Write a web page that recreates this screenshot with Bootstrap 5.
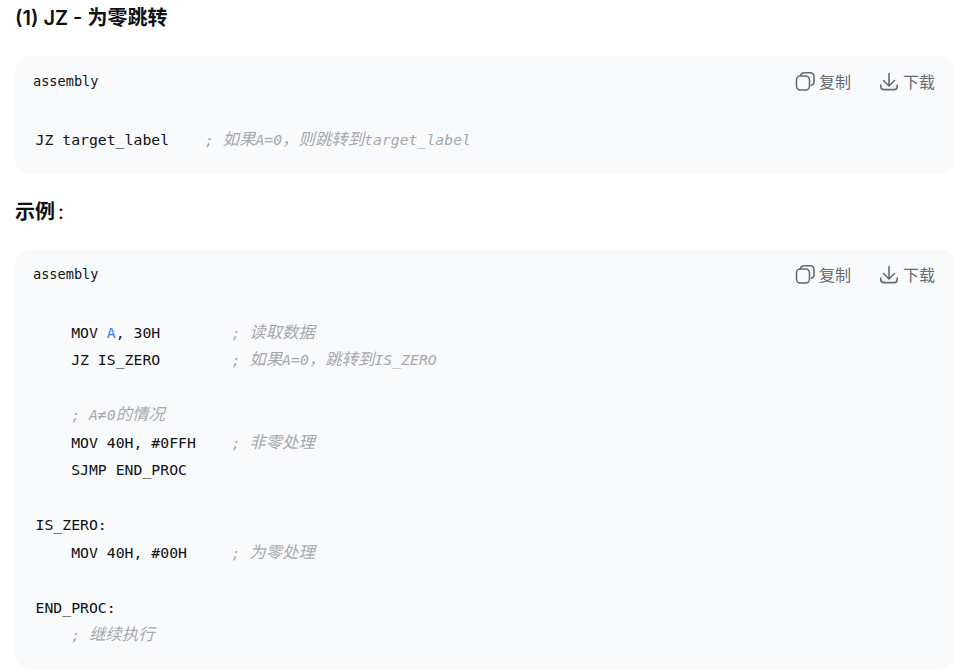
<!DOCTYPE html>
<html lang="zh">
<head>
<meta charset="utf-8">
<title>JZ</title>
<link href="https://cdn.jsdelivr.net/npm/bootstrap@5.3.0/dist/css/bootstrap.min.css" rel="stylesheet">
<style>
html,body{height:672px;overflow:hidden;background:#fff}
.page-wrap{padding:0 12px 0 15px;color:#0f1115}
.sec-title{font-size:20px;font-weight:600;line-height:28px;margin:4px 0 0;color:#0f1115;font-family:"Inter","Noto Sans CJK SC",sans-serif}
.sec-title.second{margin-top:24px}
.sec-title .colon{font-weight:400;font-family:"Inter",sans-serif;margin-left:3px}
.code-box{background:#f9fafb;border-radius:16px;padding:12px 20px 0 18px}
.code-box.first{margin-top:24px;height:118px}
.code-box.second{margin-top:23px;height:420px}
.code-head{height:26px}
.lang-name{font-family:"DejaVu Sans Mono","Noto Sans CJK SC",monospace;font-size:13.6px;line-height:26px;color:#0f1115}
.act-row{gap:28px}
.act-btn{font-size:16px;color:#666a72;line-height:26px;gap:4px;font-family:"Noto Sans CJK SC",sans-serif}
.act-btn svg{display:block}
.code-text{margin:32px 0 0 2.5px;font-family:"DejaVu Sans Mono","Noto Sans CJK SC",monospace;font-size:14.8px;line-height:27.45px;color:#0f1115;overflow:visible;white-space:pre}
.cmt{color:#a6a8ad;font-style:italic}
.cn{font-family:"Noto Sans CJK SC",sans-serif;font-size:16.4px;line-height:1}
.kw{color:#3b7de8}
</style>
</head>
<body>
<main class="page-wrap">
<h3 class="sec-title">(1) JZ - 为零跳转</h3>
<section class="code-box first">
<div class="code-head d-flex justify-content-between align-items-center">
<span class="lang-name">assembly</span>
<div class="act-row d-flex">
<span class="act-btn d-flex align-items-center"><svg width="20" height="20" viewBox="0 0 20 20" fill="none" stroke="#666a72" stroke-width="1.600"><rect x="1.500" y="5" width="13" height="14" rx="4"/><path d="M5.500 4.500C6 2.700 7.500 1.800 9.500 1.800H15C17.500 1.800 19 3.300 19 5.800V11C19 12.500 18 13.700 16.500 14.300" stroke-linecap="round"/></svg>复制</span>
<span class="act-btn d-flex align-items-center"><svg width="20" height="20" viewBox="0 0 20 20" fill="none" stroke="#666a72" stroke-width="1.600" stroke-linecap="round" stroke-linejoin="round"><path d="M10 2.500V14.500M4.500 9.500L10 15L15.500 9.500M1.800 14V15.500C1.800 17.400 3 18.600 4.900 18.600H15.100C17 18.600 18.200 17.400 18.200 15.500V14"/></svg>下载</span>
</div>
</div>
<pre class="code-text">JZ target_label    <span class="cmt">; <span class="cn">如果</span>A=0<span class="cn">，则跳转到</span>target_label</span></pre>
</section>
<h3 class="sec-title second">示例<span class="colon">:</span></h3>
<section class="code-box second">
<div class="code-head d-flex justify-content-between align-items-center">
<span class="lang-name">assembly</span>
<div class="act-row d-flex">
<span class="act-btn d-flex align-items-center"><svg width="20" height="20" viewBox="0 0 20 20" fill="none" stroke="#666a72" stroke-width="1.600"><rect x="1.500" y="5" width="13" height="14" rx="4"/><path d="M5.500 4.500C6 2.700 7.500 1.800 9.500 1.800H15C17.500 1.800 19 3.300 19 5.800V11C19 12.500 18 13.700 16.500 14.300" stroke-linecap="round"/></svg>复制</span>
<span class="act-btn d-flex align-items-center"><svg width="20" height="20" viewBox="0 0 20 20" fill="none" stroke="#666a72" stroke-width="1.600" stroke-linecap="round" stroke-linejoin="round"><path d="M10 2.500V14.500M4.500 9.500L10 15L15.500 9.500M1.800 14V15.500C1.800 17.400 3 18.600 4.900 18.600H15.100C17 18.600 18.200 17.400 18.200 15.500V14"/></svg>下载</span>
</div>
</div>
<pre class="code-text">    MOV <span class="kw">A</span>, 30H        <span class="cmt">; <span class="cn">读取数据</span></span>
    JZ IS_ZERO        <span class="cmt">; <span class="cn">如果</span>A=0<span class="cn">，跳转到</span>IS_ZERO</span>

    <span class="cmt">; A≠0<span class="cn">的情况</span></span>
    MOV 40H, #0FFH    <span class="cmt">; <span class="cn">非零处理</span></span>
    SJMP END_PROC

IS_ZERO:
    MOV 40H, #00H     <span class="cmt">; <span class="cn">为零处理</span></span>

END_PROC:
    <span class="cmt">; <span class="cn">继续执行</span></span></pre>
</section>
</main>
</body>
</html>
